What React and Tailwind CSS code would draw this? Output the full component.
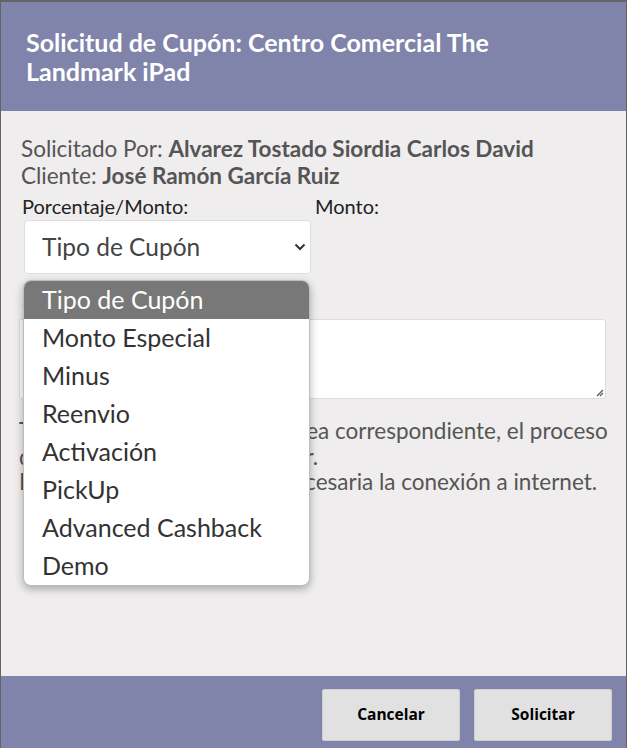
import React from "react";

const options = [
  "Tipo de Cupón",
  "Monto Especial",
  "Minus",
  "Reenvio",
  "Activación",
  "PickUp",
  "Advanced Cashback",
  "Demo",
];

export default function App() {
  return (
    <div
      className="relative h-[748px] w-[627px] overflow-hidden bg-[#646464] pt-[2px] pl-[1px] pr-[1px]"
      style={{ fontFamily: "Lato, 'Noto Sans', sans-serif" }}
    >
      <div className="flex h-full flex-col">
        {/* Header */}
        <div className="h-[109px] shrink-0 bg-[#8084ab] pl-[25px] pt-[26px]">
          <h1 className="text-[25px] font-bold leading-[29px] text-white">
            Solicitud de Cupón: Centro Comercial The
            <br />
            Landmark iPad
          </h1>
        </div>

        {/* Body */}
        <div className="relative flex-1 bg-[#efeded] pl-[20px] pr-[20px] pt-[24px]">
          <div className="text-[22.5px] leading-[27px] text-[#555555]">
            <div>
              Solicitado Por: <span className="font-bold">Alvarez Tostado Siordia Carlos David</span>
            </div>
            <div>
              Cliente: <span className="font-bold">José Ramón García Ruiz</span>
            </div>
          </div>

          <div className="mt-[4px] flex">
            <div className="w-[294px] pl-[1px]">
              <div className="text-[20px] leading-[26px] text-[#222222]">Porcentaje/Monto:</div>
              <div className="mt-[1px] ml-[2px] flex h-[54px] w-[287px] items-center justify-between rounded-[4px] border border-[#dddddd] bg-white pl-[17px] pr-[4px] text-[24.5px] text-[#444444]">
                <span>Tipo de Cupón</span>
                <svg width="12" height="8" viewBox="0 0 12 8" fill="none">
                  <path d="M1.5 1.5 L6 6 L10.5 1.5" stroke="#333" strokeWidth="2" />
                </svg>
              </div>
            </div>
            <div className="text-[20px] leading-[26px] text-[#222222]">Monto:</div>
          </div>

          <div className="mt-[18px] pl-[1px] text-[22px] leading-[26px] text-[#222222]">Comentarios:</div>
          <div className="mt-[1px] h-[80px] w-[587px] -ml-[2px] rounded-[3px] border border-[#dddddd] bg-white" />
          <div className="relative -mt-[80px] h-[80px] w-[587px] -ml-[2px] pointer-events-none">
            <svg className="absolute bottom-[2px] right-[2px]" width="10" height="10" viewBox="0 0 10 10">
              <path d="M9 3 L3 9 M9 6 L6 9" stroke="#555" strokeWidth="1.2" />
            </svg>
          </div>

          <div className="mt-[19px] -ml-[2px] whitespace-nowrap text-[22.5px] leading-[25.5px] text-[#555555]">
            <div>Tu solicitud será enviada al área correspondiente, el proceso</div>
            <div>de autorizaciones suele tardar.</div>
            <div>Para solicitar un cupón, es necesaria la conexión a internet.</div>
          </div>

          {/* Open dropdown overlay */}
          <div className="absolute left-[22px] top-[169px] w-[287px] overflow-hidden rounded-[8px] border border-[#bdbdbd] bg-white shadow-[0_3px_8px_rgba(0,0,0,0.3)]">
            {options.map((o, i) => (
              <div
                key={o}
                className={
                  i === 0
                    ? "flex h-[38px] items-center bg-[#787878] pl-[18px] text-[25px] text-white"
                    : "flex h-[38px] items-center pl-[18px] text-[25px] text-[#333333]"
                }
              >
                {o}
              </div>
            ))}
          </div>
        </div>

        {/* Footer */}
        <div className="flex h-[72px] shrink-0 items-start justify-end gap-[14px] bg-[#8084ab] pr-[14px] pt-[13px]">
          <button
            className="h-[52px] w-[138px] rounded-[2px] border border-[#cfcfcf] bg-[#e1e1e1] text-[15.5px] font-bold text-black"
            style={{ fontFamily: "'Open Sans', 'Noto Sans', sans-serif" }}
          >
            Cancelar
          </button>
          <button
            className="h-[52px] w-[138px] rounded-[2px] border border-[#cfcfcf] bg-[#e1e1e1] text-[15.5px] font-bold text-black"
            style={{ fontFamily: "'Open Sans', 'Noto Sans', sans-serif" }}
          >
            Solicitar
          </button>
        </div>
      </div>
    </div>
  );
}
